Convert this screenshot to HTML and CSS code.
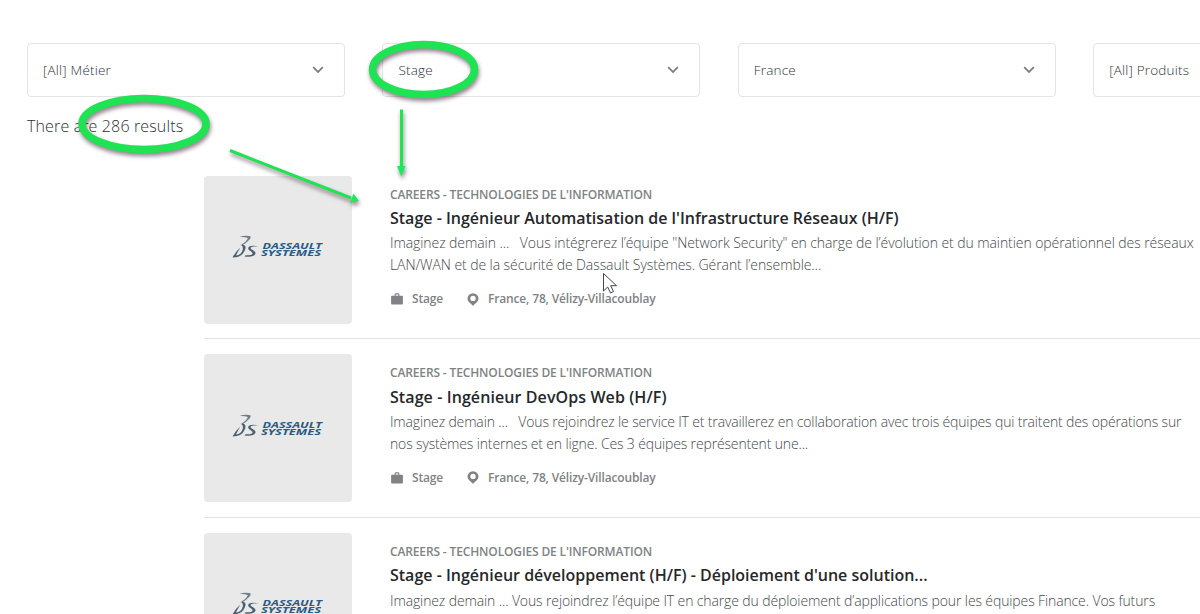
FILE: index.html
```html
<!DOCTYPE html>
<html lang="fr">
  <head>
    <meta charset="utf-8">
    <title>Careers</title>
    <link rel="stylesheet" href="styles.css">
  </head>
  <body>

    <!-- Shared icons -->
    <svg class="sprite">
      <symbol id="chevron" viewBox="0 0 12 8">
        <path d="M1.2 1.2 L6 6.1 L10.8 1.2" fill="none" stroke="#77797c" stroke-width="1.7"/>
      </symbol>
      <symbol id="briefcase" viewBox="0 0 12 12">
        <path d="M1 2.7h2.600V1.700Q3.600.3 5 .3h2Q8.400.3 8.400 1.700v1H11q.9 0 .9.900v7q0 .9-.9.900H1q-.9 0-.9-.9V3.600q0-.9.900-.9zM4.800 2.700h2.400V1.500H4.800z" fill="#808285"/>
      </symbol>
      <symbol id="pin" viewBox="0 0 12 13">
        <path fill-rule="evenodd" d="M6 .2a5.500 5.500 0 0 1 5.500 5.400c0 3.200-3.200 5-5.500 7.200C3.700 10.600.5 8.800.5 5.600A5.500 5.500 0 0 1 6 .2zM6 2.700a2.700 2.700 0 1 0 0 5.400a2.700 2.700 0 1 0 0-5.400z" fill="#808285"/>
      </symbol>
      <symbol id="logo" viewBox="0 0 92 28">
        <path d="M7.500 3Q14 .6 18.800 2.600Q18.800 6.200 10.500 11.200L9.600 10.600Q15.500 6.500 15.800 4Q13 2.600 7.500 3z" fill="#6d7c87"/>
        <path d="M8.500 10.800Q15.500 9.800 12.800 16.500Q10 23.500.5 23.500Q3.500 17.500 8.500 13.500Q5.500 18 4 21.600Q9.500 21 10.800 15.500Q11.500 12 8.500 10.800z" fill="#4a6172"/>
        <path d="M26.500 12.300Q19.500 12.300 18.500 14C19 16 24.500 16.800 23.300 20Q21.500 23.700 12.500 22.500L13.500 21.200Q20.200 21.800 20.600 19.500C20.600 17.500 15.500 16.500 16.200 13.800Q17.500 10.500 26.500 12.300z" fill="#4a6172"/>
        <g class="logo-text">
          <text x="30.500" y="14.600" textLength="59.500" lengthAdjust="spacingAndGlyphs">DASSAULT</text>
          <text x="29" y="22.300" textLength="60" lengthAdjust="spacingAndGlyphs">SYSTEMES</text>
        </g>
      </symbol>
    </svg>

    <div class="filters">
      <div class="select"><span>[All] Métier</span><svg class="chevron"><use href="#chevron"/></svg></div>
      <div class="select"><span>Stage</span><svg class="chevron"><use href="#chevron"/></svg></div>
      <div class="select"><span>France</span><svg class="chevron"><use href="#chevron"/></svg></div>
      <div class="select"><span>[All] Produits</span></div>
    </div>

    <p class="count">There are 286 results</p>

    <div class="results">
      <div class="result network">
        <div class="thumb"><svg class="logo"><use href="#logo"/></svg></div>
        <div class="info">
          <div class="category">CAREERS - TECHNOLOGIES DE L'INFORMATION</div>
          <h2 class="title">Stage - Ingénieur Automatisation de l'Infrastructure Réseaux (H/F)</h2>
          <p class="desc">Imaginez demain ... &nbsp; Vous intégrerez l’équipe "Network Security" en charge de l’évolution et du maintien opérationnel des réseaux<br>LAN/WAN et de la sécurité de Dassault Systèmes. Gérant l’ensemble...</p>
          <div class="meta">
            <svg class="briefcase"><use href="#briefcase"/></svg><span class="type">Stage</span>
            <svg class="pin"><use href="#pin"/></svg><span>France, 78, Vélizy-Villacoublay</span>
          </div>
        </div>
      </div>

      <div class="result devops">
        <div class="thumb"><svg class="logo"><use href="#logo"/></svg></div>
        <div class="info">
          <div class="category">CAREERS - TECHNOLOGIES DE L'INFORMATION</div>
          <h2 class="title">Stage - Ingénieur DevOps Web (H/F)</h2>
          <p class="desc">Imaginez demain ... &nbsp; Vous rejoindrez le service IT et travaillerez en collaboration avec trois équipes qui traitent des opérations sur<br>nos systèmes internes et en ligne. Ces 3 équipes représentent une...</p>
          <div class="meta">
            <svg class="briefcase"><use href="#briefcase"/></svg><span class="type">Stage</span>
            <svg class="pin"><use href="#pin"/></svg><span>France, 78, Vélizy-Villacoublay</span>
          </div>
        </div>
      </div>

      <div class="result">
        <div class="thumb"><svg class="logo"><use href="#logo"/></svg></div>
        <div class="info">
          <div class="category">CAREERS - TECHNOLOGIES DE L'INFORMATION</div>
          <h2 class="title">Stage - Ingénieur développement (H/F) - Déploiement d'une solution...</h2>
          <p class="desc">Imaginez demain ... Vous rejoindrez l’équipe IT en charge du déploiement d’applications pour les équipes Finance. Vos futurs</p>
        </div>
      </div>
    </div>

    <!-- Green annotations and mouse pointer -->
    <svg class="overlay" viewBox="0 0 1200 614">
      <g class="marks">
        <ellipse cx="423.500" cy="69.500" rx="51" ry="25" stroke-width="7.500"/>
        <ellipse cx="144" cy="124" rx="62" ry="25.500" stroke-width="7.500"/>
        <path d="M401.500 109.500V170" stroke-width="3"/>
        <path d="M230 150.500L351 198" stroke-width="3"/>
        <path class="head" d="M397 166h8.500l-4.200 10.500zM353.500 193.500l5.500 7.500-9 2z"/>
      </g>
      <path class="pointer" d="M603.500 273.500v17.500l4.200-4 2.800 6 3-1.400-2.800-5.900h5.800z"/>
    </svg>

  </body>
</html>
```
FILE: styles.css
```css
body {
  margin: 0;
  height: 614px;
  overflow: hidden;
  position: relative;
  background-color: #fff;
  font-family: "Open Sans", "Noto Sans", sans-serif;
}

.sprite {
  display: none;
}

/* Filters */

.filters {
  display: grid;
  grid-template-columns: repeat(4, 318px);
  gap: 37.4px;
  padding: 43px 0 0 27px;
}

.select {
  box-sizing: border-box;
  height: 54px;
  padding: 0 20px 0 15px;
  display: flex;
  align-items: center;
  justify-content: space-between;
  border: 1px solid #e3e4e6;
  border-radius: 4px;
  font-size: 13.5px;
  font-weight: 300;
  letter-spacing: 0.2px;
  color: #303338;
}

.chevron {
  width: 12px;
  height: 8px;
}

.count {
  margin: 17px 0 0 27px;
  font-size: 16px;
  font-weight: 300;
  letter-spacing: 0.14px;
  line-height: 24px;
  color: #2d2f32;
}

/* Results */

.results {
  margin: 22.6px 0 0 204.4px;
}

.result {
  display: flex;
  gap: 37.6px;
  height: 148px;
  padding: 15px 0 14.7px;
  border-bottom: 1px solid #e2e3e4;
}

.thumb {
  flex: none;
  width: 148px;
  height: 148px;
  display: flex;
  align-items: center;
  justify-content: center;
  border-radius: 4px;
  background-color: #e9e9e9;
}

.logo {
  width: 92px;
  height: 28px;
  margin-bottom: 3px;
}

.logo-text {
  font-family: "Open Sans", sans-serif;
  font-size: 8.5px;
  font-weight: 700;
  font-style: italic;
  fill: #265b87;
}

.info {
  white-space: nowrap;
  padding-top: 10px;
}

.category {
  font-size: 12px;
  font-weight: 600;
  letter-spacing: -0.14px;
  line-height: 18px;
  color: #808285;
}

.title {
  margin: 1.5px 0 0;
  font-size: 16px;
  font-weight: 600;
  line-height: 26px;
  color: #25272a;
}

.desc {
  margin: 1.2px 0 0;
  font-size: 14px;
  font-weight: 300;
  letter-spacing: -0.12px;
  line-height: 21.6px;
  color: #45484c;
}

.network .desc {
  letter-spacing: -0.08px;
}

.devops .title {
  letter-spacing: 0.09px;
}

.devops .desc {
  letter-spacing: -0.15px;
}

.meta {
  display: flex;
  align-items: center;
  margin-top: 14.6px;
  font-size: 12px;
  font-weight: 600;
  letter-spacing: -0.15px;
  line-height: 18px;
  color: #808285;
}

.briefcase {
  width: 12px;
  height: 12px;
  margin: 0 9px 0 1px;
}

.type {
  width: 55px;
}

.pin {
  width: 12px;
  height: 13px;
  margin-right: 9px;
}

/* Annotations */

.overlay {
  position: absolute;
  top: 0;
  left: 0;
  width: 1200px;
  height: 614px;
  pointer-events: none;
}

.marks {
  fill: none;
  stroke: #1ee353;
  filter: drop-shadow(1px 3px 2px rgba(60, 30, 50, 0.55));
}

.head {
  fill: #1ee85d;
  stroke: none;
}

.pointer {
  fill: #fff;
  stroke: #45454d;
  stroke-width: 1;
}
```
